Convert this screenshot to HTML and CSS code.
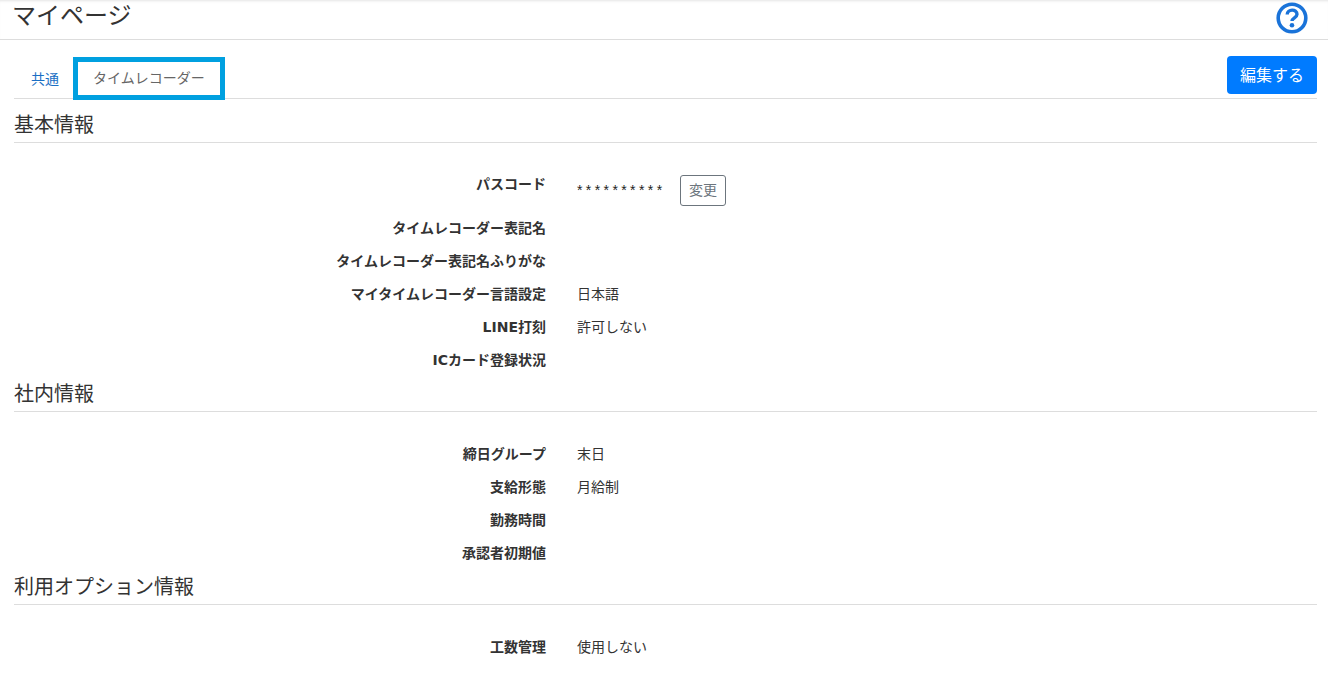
FILE: index.html
```html
<!DOCTYPE html>
<html lang="ja">
  <head>
    <meta charset="utf-8" />
    <title>マイページ</title>
    <link rel="stylesheet" href="styles.css">
  </head>
  <body>
    <header class="page-header">
      <h1>マイページ</h1>
      <svg class="help" viewBox="0 0 32 32" width="32" height="32">
        <circle cx="16" cy="16" r="13.8" fill="none" stroke="#1a73d9" stroke-width="3.6" />
        <path d="M11.2 12.600c0-5.800 9.800-6 9.800-.4 0 3.600-5 3.600-5 6.900" fill="none" stroke="#1a73d9" stroke-width="3.4" />
        <circle cx="16" cy="23.200" r="2.300" fill="#1a73d9" />
      </svg>
    </header>

    <div class="tabs">
      <a class="tab" href="#">共通</a>
      <a class="tab current" href="#">タイムレコーダー</a>
      <button class="edit">編集する</button>
    </div>

    <h2>基本情報</h2>
    <dl class="first">
      <div class="row pass"><dt>パスコード</dt><dd><span class="mask">**********</span><button class="change">変更</button></dd></div>
      <div class="row"><dt>タイムレコーダー表記名</dt><dd></dd></div>
      <div class="row"><dt>タイムレコーダー表記名ふりがな</dt><dd></dd></div>
      <div class="row"><dt>マイタイムレコーダー言語設定</dt><dd>日本語</dd></div>
      <div class="row"><dt>LINE打刻</dt><dd>許可しない</dd></div>
      <div class="row"><dt>ICカード登録状況</dt><dd></dd></div>
    </dl>

    <h2>社内情報</h2>
    <dl>
      <div class="row"><dt>締日グループ</dt><dd>末日</dd></div>
      <div class="row"><dt>支給形態</dt><dd>月給制</dd></div>
      <div class="row"><dt>勤務時間</dt><dd></dd></div>
      <div class="row"><dt>承認者初期値</dt><dd></dd></div>
    </dl>

    <h2>利用オプション情報</h2>
    <dl>
      <div class="row"><dt>工数管理</dt><dd>使用しない</dd></div>
    </dl>
  </body>
</html>
```

FILE: styles.css
```css
body {
  margin: 0;
  padding: 0;
  color: #333;
  font-family: "Liberation Sans", "Noto Sans CJK JP", sans-serif;
  font-size: 14px;
  background: #fff;
  overflow: hidden;
}

.page-header {
  display: flex;
  justify-content: space-between;
  align-items: center;
  height: 39px;
  padding: 0 19px 0 12px;
  border-bottom: 1px solid #ddd;
  box-shadow: inset 0 3px 3px -2px #e4e4e4;
}

.page-header h1 {
  margin: 0 0 8px;
  font-size: 24px;
  font-weight: 400;
  line-height: 29px;
}

.help {
  display: block;
  margin: 0 1px 4px 0;
}

.tabs {
  display: flex;
  align-items: flex-end;
  height: 58px;
  margin: 0 11px 9px 14px;
  border-bottom: 1px solid #ddd;
}

.tab {
  display: block;
  color: #1a6fc4;
  font-size: 14px;
  text-decoration: none;
  padding: 0 14px 8px 17px;
  line-height: 21px;
}

.tab.current {
  box-sizing: border-box;
  width: 152px;
  height: 43px;
  margin-bottom: -2px;
  border: 5px solid #00a0e0;
  padding: 6px 0 0 15px;
  color: #666;
  font-size: 14px;
}

.edit {
  box-sizing: border-box;
  width: 90px;
  height: 38px;
  margin: 0 0 4px auto;
  padding: 0 0 3px;
  border: 0;
  border-radius: 4px;
  background: #007bff;
  color: #fff;
  font: inherit;
  font-size: 16px;
}

h2 {
  margin: 0 11px 0 14px;
  height: 35px;
  box-sizing: border-box;
  padding-top: 4px;
  border-bottom: 1px solid #ddd;
  font-size: 20px;
  font-weight: 400;
  line-height: 26px;
}

dl {
  margin: 0;
  padding-top: 26px;
}

dl.first {
  padding-top: 31px;
}

.row {
  display: flex;
  align-items: center;
  min-height: 33px;
}

.row.pass {
  min-height: 38px;
  align-items: flex-start;
}

dt {
  box-sizing: border-box;
  width: 546px;
  font-family: "DejaVu Sans", "Noto Sans CJK JP", sans-serif;
  font-weight: 700;
  text-align: right;
  line-height: 21px;
}

dd {
  display: flex;
  align-items: center;
  margin: 0 0 0 31px;
  line-height: 21px;
}

.mask {
  width: 103px;
  padding-top: 1px;
  letter-spacing: 3.4px;
  color: #222;
}

.change {
  box-sizing: border-box;
  width: 46px;
  height: 31px;
  margin-top: 1px;
  padding: 0;
  border: 1px solid #6c757d;
  border-radius: 3px;
  background: #fff;
  color: #6c757d;
  font: inherit;
  font-size: 14px;
}
```
